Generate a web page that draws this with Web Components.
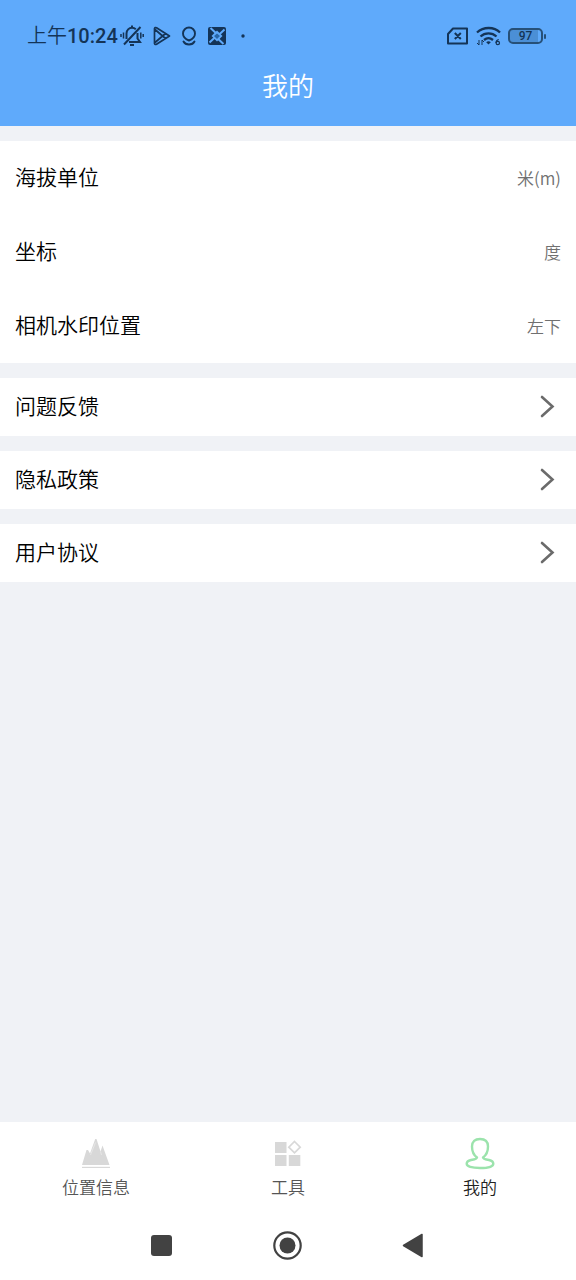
<!DOCTYPE html>
<html lang="zh-CN">
<head>
<meta charset="utf-8">
<meta name="viewport" content="width=device-width, initial-scale=1">
<title>我的</title>
<style>
  body { margin: 0; font-family: Roboto, "Noto Sans CJK SC", sans-serif; font-weight: 350; color: #111; background: #f0f2f6; }
</style>
</head>
<body>
<profile-app></profile-app>
<script>
const define = (name, html) => {
  const template = document.createElement('template');
  template.innerHTML = html;
  customElements.define(name, class extends HTMLElement {
    constructor() {
      super();
      this.attachShadow({ mode: 'open' }).append(template.content.cloneNode(true));
    }
  });
};

define('status-bar', `
<style>
  :host { display: flex; align-items: center; justify-content: space-between; height: 72px; padding: 0 30px 0 27px; color: #143457; }
  .group { display: flex; align-items: center; }
  .time { font-size: 20px; line-height: 24px; font-weight: 500; }
  .time span { font-weight: 350; }
  .left { gap: 9px; }
  .clock { display: flex; align-items: center; gap: 2px; }
  .right { gap: 7px; }
  svg { display: block; flex: none; }
  .battery { display: flex; align-items: center; gap: 1px; }
  .level { box-sizing: border-box; width: 35px; height: 16px; border: 2px solid #265078; border-radius: 5px; background: linear-gradient(90deg, #4b8fd6 28px, transparent 28px); font-size: 12px; line-height: 13px; font-weight: 500; text-align: center; }
  .tip { width: 2px; height: 5px; border-radius: 1px; background: #265078; }
</style>
<div class="group left">
  <div class="clock">
    <div class="time"><span>上午</span>10:24</div>
    <svg width="24" height="22" viewBox="0 0 24 22" fill="none" stroke="currentColor" stroke-width="2">
      <path d="M6.500 14V8.500C6.500 5 9 2.800 12 2.800c1.500 0 2.800.5 3.800 1.400M17.500 8v5.500l2.500 3.500H9M12 .5v2M10 20h4M4 19.500 20.500 2"/>
      <path d="M3.500 7.500v6M1 9v3M20.800 7.500v6M23.200 9v3" stroke-width="1.500"/>
    </svg>
  </div>
  <svg width="18" height="22" viewBox="0 0 18 22" fill="none" stroke="currentColor" stroke-width="1.700" stroke-linejoin="round">
    <path d="M1.500 3.500v15q.5 1.500 2 .7L16.500 11 3.500 2.800q-1.500-.7-2 .7ZM2 4.500l10.500 9M2 17.500l10.500-9"/>
  </svg>
  <svg width="18" height="22" viewBox="0 0 18 22" fill="none" stroke="currentColor" stroke-width="1.900" stroke-linecap="round">
    <path d="M9 15.500C5 14 3 11.500 3 8.500a6 6 0 0 1 12 0c0 3-2 5.500-6 7ZM3.500 16.500c2 4 9 4 11 0"/>
  </svg>
  <svg width="20" height="22" viewBox="0 0 20 22">
    <rect x="1" y="2" width="18" height="18" rx="2" fill="currentColor"/>
    <path d="m10 5.500 5.500 5.500-5.500 5.500L4.500 11Z" fill="#5faafb"/>
    <path d="M3.500 3 12 11M17.500 4.500 9 12.500M16.500 19 8 11M2.500 17.500 11 9.500" fill="none" stroke="#5faafb" stroke-width="2"/>
    <path d="m10 8.500 3 2.500-3 3-3-3Z" fill="#2867a8"/>
  </svg>
  <svg width="16" height="22" viewBox="0 0 16 22"><circle cx="7" cy="11" r="1.700" fill="currentColor"/></svg>
</div>
<div class="group right">
  <svg width="23" height="18" viewBox="0 0 23 18" fill="none" stroke="currentColor" stroke-width="2" stroke-linejoin="round">
    <path d="M7 1.500h14v15H2V7ZM8.800 6l6 6m0-6-6 6"/>
  </svg>
  <svg width="25" height="22" viewBox="0 0 25 22" fill="none" stroke="currentColor" stroke-width="2.300">
    <path d="M1 7.500c6.500-6 17-6 23 0M4.500 11.500c4.500-4.200 11.500-4.200 16 0M8 15c3-2.500 6-2.500 9 0"/>
    <path d="m12.500 19.500-2.300-2.300c1.300-1.200 3.300-1.200 4.600 0Z" fill="currentColor" stroke="none"/>
    <path d="M3 15v5M1 18l2 2M6 20v-5M6 15l2 2" stroke-width="1"/>
    <path d="M22.800 14.500c-2 .3-2.800 1.500-2.800 3.500" stroke-width="1.200"/>
    <circle cx="21.800" cy="18" r="1.700" stroke-width="1.200"/>
  </svg>
  <div class="battery"><div class="level">97</div><div class="tip"></div></div>
</div>`);

define('page-header', `
<style>
  :host { display: block; background: #5faafb; padding-bottom: 14px; }
  h1 { margin: 0; height: 40px; line-height: 30px; font-size: 26px; font-weight: 350; color: #fff; text-align: center; }
</style>
<status-bar></status-bar>
<h1><slot></slot></h1>`);

define('settings-card', `
<style>
  :host { display: block; background: #fff; }
</style>
<slot></slot>`);

define('setting-row', `
<style>
  :host { display: block; }
  button { display: flex; align-items: center; justify-content: space-between; width: 100%; height: 74px; padding: 0 15px; border: 0; background: none; font: inherit; font-size: 21px; line-height: 30px; color: #000; text-align: left; }
  ::slotted([slot="value"]) { font-family: "Noto Sans CJK SC", sans-serif; font-size: 17px; color: #707070; }
</style>
<button type="button"><slot></slot><slot name="value"></slot></button>`);

define('link-row', `
<style>
  :host { display: block; }
  a { display: flex; align-items: center; justify-content: space-between; height: 58px; padding: 0 21px 0 15px; font-size: 21px; line-height: 30px; color: #000; text-decoration: none; }
  svg { display: block; }
</style>
<a href="#"><slot></slot>
  <svg width="15" height="24" viewBox="0 0 15 24" fill="none" stroke="#6b6b6b" stroke-width="2.600" stroke-linecap="round"><path d="m2 2 10.500 9.500L2 21"/></svg>
</a>`);

define('tab-item', `
<style>
  :host { display: block; flex: 1; color: #555; }
  a { display: flex; flex-direction: column; align-items: center; gap: 4px; padding-top: 14px; color: inherit; text-decoration: none; font-size: 17px; line-height: 28px; }
  ::slotted(svg) { display: block; }
</style>
<a href="#"><slot name="icon"></slot><span><slot></slot></span></a>`);

define('tab-bar', `
<style>
  :host { display: flex; height: 88px; background: #fff; }
</style>
<slot></slot>`);

define('system-nav', `
<style>
  :host { display: flex; justify-content: center; height: 70px; background: #fff; }
  button { width: 126px; padding: 0; border: 0; background: none; }
  svg { display: block; margin: 0 auto; }
</style>
<button type="button" aria-label="最近任务"><svg width="30" height="30" viewBox="0 0 30 30"><rect x="4" y="5" width="21" height="21" rx="3" fill="#424242"/></svg></button>
<button type="button" aria-label="主屏幕"><svg width="30" height="30" viewBox="0 0 30 30"><circle cx="14.500" cy="15.500" r="13.200" fill="none" stroke="#424242" stroke-width="2.200"/><circle cx="14.500" cy="15.500" r="8" fill="#424242"/></svg></button>
<button type="button" aria-label="返回"><svg width="30" height="30" viewBox="0 0 30 30"><path d="M23 4.500v22L4.500 15.500Z" fill="#424242" stroke="#424242" stroke-width="1.500" stroke-linejoin="round"/></svg></button>`);

define('profile-app', `
<style>
  :host { display: flex; flex-direction: column; min-height: 100vh; }
  main { flex: 1; display: flex; flex-direction: column; gap: 15px; padding: 15px 0; }
  .active { color: #222; }
</style>
<page-header>我的</page-header>
<main>
  <settings-card>
    <setting-row>海拔单位<span slot="value">米(m)</span></setting-row>
    <setting-row>坐标<span slot="value">度</span></setting-row>
    <setting-row>相机水印位置<span slot="value">左下</span></setting-row>
  </settings-card>
  <settings-card><link-row>问题反馈</link-row></settings-card>
  <settings-card><link-row>隐私政策</link-row></settings-card>
  <settings-card><link-row>用户协议</link-row></settings-card>
</main>
<tab-bar>
  <tab-item>
    <svg slot="icon" width="32" height="34" viewBox="0 0 32 34" fill="#d8d8d8"><path d="M2 29 6.500 14 8 14 10 17.500 15.200 3H16.500L20.500 15.500 22.500 9.500 29.500 29Z"/><path d="m10.500 19 5-12.500M20.500 15.500 21.500 19" fill="none" stroke="#e8e8e8" stroke-width=".9"/><path d="M2 30.800h28v1.200H2Z"/></svg>
    位置信息
  </tab-item>
  <tab-item>
    <svg slot="icon" width="32" height="34" viewBox="0 0 32 34" fill="#d8d8d8"><path d="M3 6h11.500v11H3ZM3 19h11.500v11H3ZM16.800 19h11.500v11H16.800Z"/><path d="m22.500 5.500 5.700 5.700-5.700 5.700-5.700-5.700Z" fill="none" stroke="#d8d8d8" stroke-width="1.700"/></svg>
    工具
  </tab-item>
  <tab-item class="active">
    <svg slot="icon" width="32" height="34" viewBox="0 0 32 34" fill="none" stroke="#9be3ac" stroke-width="2.400" stroke-linejoin="round"><path d="M13 21.500C9.500 19 8 14.500 8 10.500 8 5.500 11 3 16 3s8 2.500 8 7.500c0 4-1.500 8.500-5 11 .5 2 3 2 6 2.500 3 .7 4.300 2 4.300 3.700 0 2.800-5 4.300-13.300 4.300S2.700 30.500 2.700 27.700C2.700 26 4 24.700 7 24c3-.5 5.500-.5 6-2.500Z"/></svg>
    我的
  </tab-item>
</tab-bar>
<system-nav></system-nav>`);
</script>
</body>
</html>
